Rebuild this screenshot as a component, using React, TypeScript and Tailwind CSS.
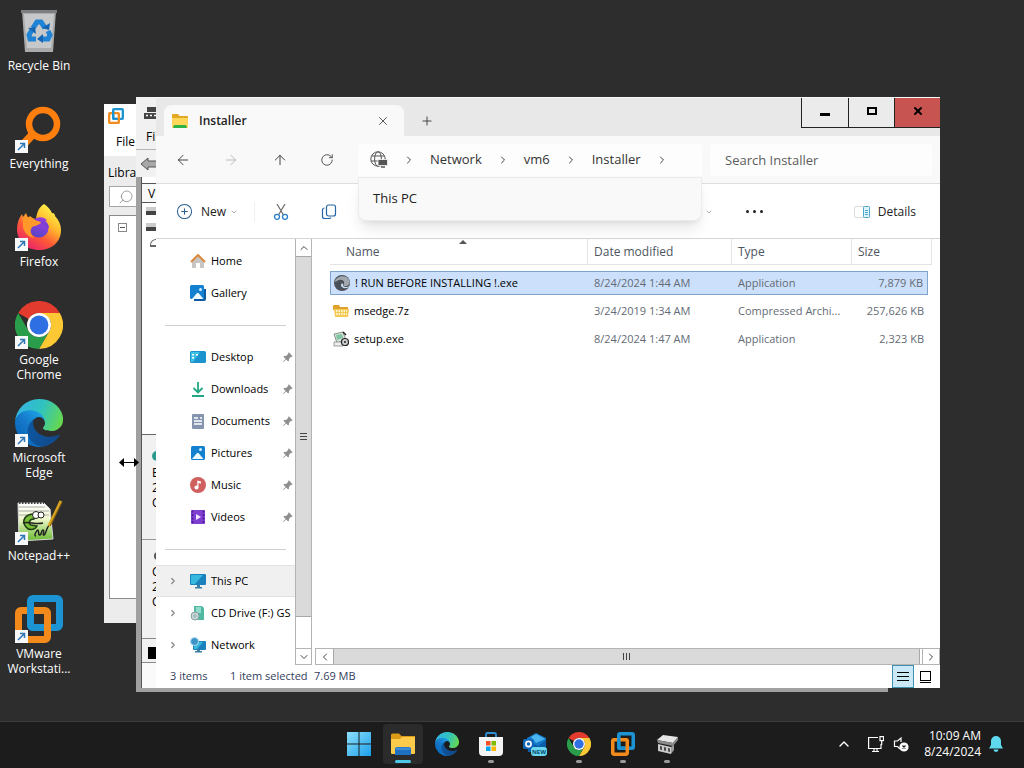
import type { ReactNode } from "react"
import {
  ArrowLeft,
  ArrowRight,
  ArrowUp,
  ChevronDown,
  ChevronLeft,
  ChevronRight,
  ChevronUp,
  CirclePlus,
  Plus,
  RotateCw,
  Search,
  X,
} from "lucide-react"
import { BsPinAngleFill } from "react-icons/bs"

/* ---------- app logos ---------- */

function EdgeLogo({ className }: { className?: string }) {
  return (
    <svg viewBox="0 0 256 256" className={className}>
      <defs>
        <linearGradient id="edgeA" x1="0" y1="0" x2="1" y2="0.3">
          <stop offset="0" stopColor="#0c59a4" />
          <stop offset="1" stopColor="#114a8b" />
        </linearGradient>
        <linearGradient id="edgeB" x1="0.8" y1="0.2" x2="0.2" y2="0.9">
          <stop offset="0" stopColor="#1b9de2" />
          <stop offset="0.5" stopColor="#1676c8" />
          <stop offset="1" stopColor="#0667ba" />
        </linearGradient>
        <linearGradient id="edgeC" x1="0" y1="0.3" x2="1" y2="0.6">
          <stop offset="0" stopColor="#35b5e3" />
          <stop offset="0.5" stopColor="#2fc2c0" />
          <stop offset="1" stopColor="#66d850" />
        </linearGradient>
      </defs>
      <path
        fill="url(#edgeA)"
        d="M231 190.5c-3.4 1.8-6.9 3.4-10.5 4.7a101.8 101.8 0 0 1-35.9 6.5c-47.3 0-88.5-32.5-88.5-74.3a31.5 31.5 0 0 1 16.4-27.3c-42.8 1.8-53.8 46.4-53.8 72.5 0 73.9 68.1 81.4 82.8 81.4 7.9 0 19.8-2.3 27-4.6l1.3-.4a128.3 128.3 0 0 0 66.6-52.8 4 4 0 0 0-5.4-5.7Z"
      />
      <path
        fill="url(#edgeB)"
        d="M105.7 241.4a79.2 79.2 0 0 1-22.7-21.3 80.7 80.7 0 0 1 29.5-120c3.2-1.5 8.4-4.1 15.5-4a32.4 32.4 0 0 1 25.7 13 31.9 31.9 0 0 1 6.3 18.7c0-.2 24.5-79.6-80-79.6-43.9 0-80 41.6-80 78.2a130.2 130.2 0 0 0 12.1 56 128 128 0 0 0 156.4 67.1 75.5 75.5 0 0 1-62.8-8Z"
      />
      <path
        fill="url(#edgeC)"
        d="M152.3 148.9c-.8 1-3.3 2.5-3.3 5.7 0 2.6 1.7 5.2 4.8 7.3 14.4 10.1 41.7 8.7 41.8 8.7a59.6 59.6 0 0 0 30.4-8.3 61.4 61.4 0 0 0 30.4-53c.2-22.5-8-37.4-11.3-43.9C224 24.2 178.8 0 129.6 0A128 128 0 0 0 .1 126.2c.5-36.5 36.8-66 80-66 3.5 0 23.5.3 42 10a72.6 72.6 0 0 1 30.9 29.3c6.1 10.6 7.2 24.1 7.2 29.5s-2.7 13.3-7.9 19.9Z"
      />
    </svg>
  )
}

function ChromeLogo({ className }: { className?: string }) {
  return (
    <svg viewBox="0 0 48 48" className={className}>
      <path fill="#e33b2e" d="M3.2 12A24 24 0 0 1 44.8 12H24a12 12 0 0 0-10.4 6z" />
      <path fill="#fcc934" d="M44.8 12A24 24 0 0 1 24 48l10.4-18A12 12 0 0 0 34.4 18L24 12z" />
      <path fill="#2a9d4a" d="M24 48A24 24 0 0 1 3.2 12l10.4 18A12 12 0 0 0 34.4 30z" />
      <circle cx="24" cy="24" r="12" fill="#fff" />
      <circle cx="24" cy="24" r="9.4" fill="#2f6fe4" />
    </svg>
  )
}

function VmwareLogo({ className }: { className?: string }) {
  return (
    <svg viewBox="0 0 48 48" className={className} fill="none" strokeWidth="7">
      <rect x="15.500" y="3.500" width="29" height="29" rx="2.500" stroke="#1c93d2" />
      <path stroke="#f38b1c" d="M19 15.500H6A2.500 2.500 0 0 0 3.500 18v24A2.500 2.500 0 0 0 6 44.500h24a2.500 2.500 0 0 0 2.500-2.500V18a2.500 2.500 0 0 0-2.500-2.500H18" />
      <path stroke="#1c93d2" d="M15.500 10v20a2.500 2.500 0 0 0 2.500 2.500H28" />
    </svg>
  )
}

function FirefoxLogo({ className }: { className?: string }) {
  return (
    <svg viewBox="0 0 48 48" className={className}>
      <defs>
        <linearGradient id="ffBody" x1="0.8" y1="0.1" x2="0.25" y2="0.95">
          <stop offset="0" stopColor="#fff04a" />
          <stop offset="0.35" stopColor="#ffb52c" />
          <stop offset="0.65" stopColor="#ff5a36" />
          <stop offset="1" stopColor="#e9256a" />
        </linearGradient>
        <linearGradient id="ffGlobe" x1="0.7" y1="0" x2="0.3" y2="1">
          <stop offset="0" stopColor="#a63be0" />
          <stop offset="1" stopColor="#5046c8" />
        </linearGradient>
      </defs>
      <path
        fill="url(#ffBody)"
        d="M29 1c5 3 7 7 8 9 2 0 3 1 3 3 4 4 6 9 6 14 0 12-9 20-22 20S2 38 2 26c0-6 2-11 5-15l1 3 3-4 2 5 2-2c2 2 4 3 6 3 1-7 3-12 8-15z"
      />
      <circle cx="24" cy="25" r="9.500" fill="url(#ffGlobe)" />
      <path fill="url(#ffGlobe)" d="M19 17c3-3 8-4 13 0l-2 1c3 2 4 5 4 7l-8-5z" />
      <path fill="#ff9a2a" d="M8 14c5-1 9 0 12 3l6 2c-1 3-4 3-6 4-2 0-3 1-4 3-1 3 0 6 3 9-6-1-10-6-11-11z" />
    </svg>
  )
}

function FolderLogo({ className }: { className?: string }) {
  return (
    <svg viewBox="0 0 24 24" className={className}>
      <path fill="#dd9a16" d="M0 3a1.500 1.500 0 0 1 1.500-1.500H8L10.500 4H24v7H0z" />
      <path fill="#fccb4b" d="M0 7h9l2-2h12a1 1 0 0 1 1 1v15a1 1 0 0 1-1 1H1a1 1 0 0 1-1-1z" />
      <path fill="#1f6fc0" d="M4 23v-6a2 2 0 0 1 2-2h12a2 2 0 0 1 2 2v6z" />
      <path fill="#3d8bd2" d="M5 15.500h14V18H5z" />
    </svg>
  )
}

function RecycleBin() {
  return (
    <svg viewBox="0 0 48 48" className="size-12">
      <path fill="#a9abac" d="M7 4h34l-3 41H10z" />
      <path fill="#c6c8c9" d="M9 7h30l-3 34H12z" />
      <path fill="#7d7f80" d="M6 3h36v3H6z" />
      <g fill="none" stroke="#1f83d6" strokeWidth="5">
        <path d="m18 21 4-6h4l4 6" />
        <path d="m33 24 2 4-2 4h-6" />
        <path d="M21 32h-6l-1-4 3-5" />
      </g>
      <path fill="#1465b3" d="m27 21 7 2 1-7zM28 27v9l-6-4zM13 21l7-1 1 7z" />
    </svg>
  )
}

function EverythingLogo() {
  return (
    <svg viewBox="0 0 48 48" className="size-12" fill="none" stroke="#ff7f0e">
      <circle cx="28" cy="19" r="14" strokeWidth="6.500" />
      <path d="M18 29 6 42" strokeWidth="8" />
    </svg>
  )
}

function NotepadLogo() {
  return (
    <svg viewBox="0 0 48 48" className="size-12">
      <defs>
        <linearGradient id="npPage" x1="0" y1="0" x2="0" y2="1">
          <stop offset="0" stopColor="#fff" />
          <stop offset="0.4" stopColor="#f2f8cf" />
          <stop offset="1" stopColor="#67b92e" />
        </linearGradient>
      </defs>
      <path fill="url(#npPage)" stroke="#d8d8d8" d="M3 6h26l6 6 3 30-34 2z" />
      <path stroke="#444" strokeWidth="2" strokeDasharray="1.500 1.500" d="M4 6h25" />
      <path stroke="#aaa" d="M4 10h26M4 14h30M4 18h30" />
      <path fill="#79bd38" stroke="#1c3d10" strokeWidth="1.500" d="M19 17c-9 0-13 7-8 13 3 4 9 3 11-1l-6-1c-3-1-2-6 3-6z" />
      <circle cx="21" cy="18" r="3.500" fill="#fff" stroke="#222" />
      <circle cx="26" cy="18" r="3" fill="#fff" stroke="#222" />
      <path fill="none" stroke="#222" strokeWidth="1.500" d="M8 26c6-2 12 2 20 0M21 39c-3 0 1-6 2-6s0 6 2 5 1-5 3-5-1 6 1 5 3-9 5-9" />
      <path stroke="#d9a520" strokeWidth="3" d="M46 4 34 29" />
      <path stroke="#7a5a10" d="M47 5 35 29" />
    </svg>
  )
}

function ServerIcon({ className }: { className?: string }) {
  return (
    <svg viewBox="0 0 24 24" className={className}>
      <path fill="#e6e6e6" d="M2 8 8 3l15 2-5 6z" />
      <path fill="#8b8b8b" d="m2 8 16 3v3L3 11zM18 11l5-6v3l-5 6z" />
      <path fill="#c9c9c9" d="m3 12 13 3v7L3 19z" />
      <path fill="#9b9b9b" d="m16 15 3-2v5l-3 4z" />
      <path fill="#4a4a4a" d="m5 14 2 .5V18l-2-.5zM9 15l2 .5V19l-2-.5zM13 16l2 .5V20l-2-.5z" />
    </svg>
  )
}

function StartLogo() {
  return (
    <svg viewBox="0 0 24 24" className="size-6">
      <defs>
        <linearGradient id="startFill" x1="0" y1="0" x2="24" y2="24" gradientUnits="userSpaceOnUse">
          <stop offset="0" stopColor="#8ee0fb" />
          <stop offset="1" stopColor="#1b9fea" />
        </linearGradient>
      </defs>
      <path fill="url(#startFill)" d="M0 0h11.500v11.500H0zM12.500 0H24v11.500H12.500zM0 12.500h11.500V24H0zM12.500 12.500H24V24H12.500z" />
    </svg>
  )
}

function StoreLogo() {
  return (
    <svg viewBox="0 0 24 24" className="size-6">
      <path fill="none" stroke="#2f8fd6" strokeWidth="1.800" d="M7 6V2.500A1.500 1.500 0 0 1 8.500 1h7A1.500 1.500 0 0 1 17 2.500V6" />
      <path fill="#f4f4f4" d="M0 5h24v15a4 4 0 0 1-4 4H4a4 4 0 0 1-4-4z" />
      <path fill="#f25022" d="M7 9h4.500v4.500H7z" />
      <path fill="#7fba00" d="M12.500 9H17v4.500h-4.500z" />
      <path fill="#00a4ef" d="M7 14.500h4.500V19H7z" />
      <path fill="#ffb900" d="M12.500 14.500H17V19h-4.500z" />
    </svg>
  )
}

function OutlookNewLogo() {
  return (
    <svg viewBox="0 0 24 24" className="size-6">
      <path fill="#1479c9" d="M4 6 13 1l10 5v9H4z" />
      <path fill="#4ab5ef" d="m8 5 5-3 9 5-9 4z" />
      <path fill="#0a5ba8" d="m4 9 11 5 8-6v12H5z" />
      <rect y="7" width="11" height="10" rx="1.500" fill="#0f67b8" />
      <circle cx="5.500" cy="12" r="2.600" fill="none" stroke="#fff" strokeWidth="1.600" />
      <rect x="8" y="15" width="16" height="9" rx="3" fill="#69d8ee" />
      <text x="16" y="21.500" textAnchor="middle" fontSize="6" fontWeight="700" fill="#0b4a70">
        NEW
      </text>
    </svg>
  )
}

/* ---------- small explorer icons ---------- */

function TabFolderIcon() {
  return (
    <svg viewBox="0 0 16 16" className="size-4">
      <path fill="#e5a823" d="M0 2a1 1 0 0 1 1-1h5l1.500 2H15a1 1 0 0 1 1 1v4H0z" />
      <path fill="#ffd75a" d="M0 5h16v9a1 1 0 0 1-1 1H1a1 1 0 0 1-1-1z" />
      <path fill="#2fb344" d="M2 12h12l1 3H1z" />
    </svg>
  )
}

function HomeIcon() {
  return (
    <svg viewBox="0 0 16 16" className="size-4">
      <path fill="#c9c5c3" d="M2 8l6-6 6 6v7h-4v-5H6v5H2z" />
      <path fill="none" stroke="#d98a3d" strokeWidth="2" strokeLinejoin="round" d="M1 9l7-7 7 7" />
    </svg>
  )
}

function PictureIcon({ stacked }: { stacked?: boolean }) {
  return (
    <svg viewBox="0 0 16 16" className="size-4">
      {stacked && <path fill="#0c5aa0" d="M4 4h12v10a2 2 0 0 1-2 2H4z" />}
      <rect x={stacked ? 0 : 1} y={stacked ? 0 : 1} width="14" height="14" rx="1.500" fill="#1380d0" />
      <path fill="#eef8ff" d="m2 14 5-6 1.500 0 5 6z" />
      <circle cx="10.500" cy="4.500" r="1.500" fill="#d4efff" />
    </svg>
  )
}

function DesktopIcon() {
  return (
    <svg viewBox="0 0 16 16" className="size-4">
      <rect y="2" width="16" height="12" rx="1.500" fill="#1c93cf" />
      <path fill="#3fc0e4" d="M1 3h9L3 13H1z" />
      <path fill="#fff" d="M2 5h2v1.500H2zM2 8h2v1.500H2zM6 5h2v1.500H6z" />
    </svg>
  )
}

function DownloadIcon() {
  return (
    <svg viewBox="0 0 16 16" className="size-4" fill="none" stroke="#1fa883" strokeWidth="1.800">
      <path d="M8 1v10M3.500 7 8 11.500 12.500 7M2 15h12" />
    </svg>
  )
}

function DocumentIcon() {
  return (
    <svg viewBox="0 0 16 16" className="size-4">
      <rect x="2" y="1" width="12" height="15" rx="1" fill="#8794b0" />
      <path stroke="#fff" strokeWidth="1.400" d="M4 5h4M4 8h8M4 11h8M10 5h2" />
    </svg>
  )
}

function MusicIcon() {
  return (
    <svg viewBox="0 0 16 16" className="size-4">
      <circle cx="8" cy="8" r="8" fill="#d0605f" />
      <circle cx="6.500" cy="10.500" r="2" fill="#fff" />
      <path fill="#fff" d="M7.300 3.500 11 4.500v2L8.500 6v4.500H7.300z" />
    </svg>
  )
}

function VideoIcon() {
  return (
    <svg viewBox="0 0 16 16" className="size-4">
      <rect x="1" y="1" width="14" height="14" rx="1" fill="#7e3fd0" />
      <path stroke="#4a1d94" strokeWidth="1.600" strokeDasharray="2 1.500" d="M2.500 1.500v13M13.500 1.500v13" />
      <path fill="#f1e6ff" d="m6 5 5 3-5 3z" />
    </svg>
  )
}

function MonitorIcon({ globe }: { globe?: boolean }) {
  return (
    <svg viewBox="0 0 16 16" className="size-4">
      <rect x={globe ? 3 : 0} y={globe ? 4 : 1} width={globe ? 13 : 16} height={globe ? 9 : 11} rx="1" fill="#1b82bd" />
      <path fill="#37b9df" d={globe ? "M4 5h9l-6 7H4z" : "M1 2h12L5 11H1z"} />
      <path fill="#3b7ea3" d="M7 12h3v2h2v1.500H5V14h2z" />
      {globe && <circle cx="4.500" cy="4.500" r="4" fill="#3d95c7" stroke="#b7dff2" />}
    </svg>
  )
}

function CdDriveIcon() {
  return (
    <svg viewBox="0 0 16 16" className="size-4">
      <path fill="#51b9a2" d="M4 1h8l2 2v12H4z" />
      <path fill="#93dccb" d="M6 2h5v6H6z" />
      <circle cx="5" cy="11" r="4" fill="#c9d6d6" stroke="#86a3a3" />
      <circle cx="5" cy="11" r="1.200" fill="#fff" stroke="#86a3a3" />
    </svg>
  )
}

function GrayEdgeIcon() {
  return (
    <svg viewBox="0 0 16 16" className="size-4">
      <circle cx="8" cy="8" r="8" fill="#4b5158" />
      <path fill="#a2a8af" d="M1 6C3 1 12-1 15 5c2 4-1 6-4 6-2 0-2-1-1-2 1-3-2-5-5-4S1 8 1 6z" />
      <path fill="#cfe0f7" d="M9 9c-1 3 3 4 7 2-2 3-9 3-9-1 0-1 1-2 2-1z" />
    </svg>
  )
}

function ArchiveIcon() {
  return (
    <svg viewBox="0 0 16 16" className="size-4">
      <path fill="#e0a22c" d="M0 3a1 1 0 0 1 1-1h5l1 2h8v3H0z" />
      <path fill="#f5c955" d="M1 6h15l-1 8H2z" />
      <path stroke="#fff3c9" strokeWidth="2" strokeDasharray="1.500 1" d="M3 8h11M3 11h11" />
    </svg>
  )
}

function SetupIcon() {
  return (
    <svg viewBox="0 0 16 16" className="size-4">
      <path fill="#d7e3d9" stroke="#5d6b60" strokeWidth="0.700" d="m1 3 9-2 3 8-9 3z" />
      <path fill="#7fc4a3" d="m3 4 6-1 1 4-6 2z" />
      <path fill="#eee" stroke="#777" strokeWidth="0.700" d="M1 11h9v4H1z" />
      <circle cx="12" cy="11" r="3.500" fill="#cfcfcf" stroke="#222" strokeWidth="1.200" />
      <circle cx="12" cy="11" r="1" fill="#222" />
      <path stroke="#222" strokeWidth="1.500" d="m10 1 3 3" />
    </svg>
  )
}

function GlobeMonitorIcon() {
  return (
    <svg viewBox="0 0 18 18" className="size-[18px]" fill="none" stroke="#555">
      <circle cx="8" cy="8" r="7.200" />
      <ellipse cx="8" cy="8" rx="3.400" ry="7.200" />
      <path d="M1.500 5h13M1 10h8" />
      <path fill="#555" stroke="#f9f9f9" strokeWidth="0.800" d="M8 8.500h9.500v6H8z" />
      <path d="M11 16h4" strokeWidth="1.500" />
    </svg>
  )
}

function CutIcon() {
  return (
    <svg viewBox="0 0 16 16" className="size-4" fill="none">
      <path stroke="#6b6b6b" strokeWidth="1.200" d="M4 0l6.500 11M12 0 5.500 11" />
      <circle cx="4" cy="12.800" r="2.500" stroke="#2b7fd0" strokeWidth="1.300" />
      <circle cx="12" cy="12.800" r="2.500" stroke="#2b7fd0" strokeWidth="1.300" />
    </svg>
  )
}

function CopyIcon() {
  return (
    <svg viewBox="0 0 16 16" className="size-4" fill="none" strokeWidth="1.200">
      <rect x="5.500" y="1" width="9" height="11" rx="2" stroke="#2465a8" />
      <path stroke="#2465a8" d="M3.500 4A2 2 0 0 0 1.500 6v6.500a2 2 0 0 0 2 2H8a2 2 0 0 0 2-1" />
    </svg>
  )
}

function DetailsIcon() {
  return (
    <svg viewBox="0 0 16 14" className="h-[14px] w-4" fill="none">
      <rect x="0.500" y="1.500" width="15" height="11" rx="1.500" stroke="#dcdcdc" />
      <rect x="9.500" y="1.500" width="6" height="11" rx="1" fill="#dff3fa" stroke="#4ea9c9" />
      <path stroke="#4ea9c9" d="M11 5.500h3M11 7.500h3M11 9.500h3" />
    </svg>
  )
}

/* ---------- desktop ---------- */

const shortcuts: { label: string; icon: ReactNode; link?: boolean }[] = [
  { label: "Recycle Bin", icon: <RecycleBin /> },
  { label: "Everything", icon: <EverythingLogo />, link: true },
  { label: "Firefox", icon: <FirefoxLogo className="size-12" />, link: true },
  { label: "Google Chrome", icon: <ChromeLogo className="size-12" />, link: true },
  { label: "Microsoft Edge", icon: <EdgeLogo className="size-12" />, link: true },
  { label: "Notepad++", icon: <NotepadLogo />, link: true },
  { label: "VMware Workstati...", icon: <VmwareLogo className="size-12" />, link: true },
]

function DesktopShortcuts() {
  return (
    <div className="flex w-[78px] flex-col">
      {shortcuts.map((s) => (
        <button key={s.label} className="flex h-[98px] flex-col items-center gap-[3px] pt-[7px] text-white">
          <span className="relative">
            {s.icon}
            {s.link && (
              <svg viewBox="0 0 13 13" className="absolute bottom-0 left-0 size-[13px]">
                <path fill="#f6f8fa" d="M0 0h13v13H0z" />
                <path fill="none" stroke="#2f76b5" strokeWidth="1.500" d="m3 10 6-6M5 3.500h4.500V8" />
              </svg>
            )}
          </span>
          <span className="w-[70px] text-center text-xs leading-[15px]">{s.label}</span>
        </button>
      ))}
    </div>
  )
}

function LibraryWindow() {
  return (
    <div className="absolute bottom-[98px] left-[104px] top-[104px] flex w-[300px] flex-col bg-[#ececec] text-xs text-black">
      <div className="flex h-6 items-center bg-white pl-1">
        <VmwareLogo className="size-4" />
      </div>
      <div className="flex h-7 items-center bg-white pl-3">File</div>
      <div className="flex h-[30px] items-center pt-1 pl-1">Library</div>
      <div className="ml-[5px] flex h-[21px] shrink-0 items-center border border-[#a5a5a5] bg-white pl-2">
        <Search className="size-4 -scale-x-100 text-[#888]" strokeWidth={1.2} />
      </div>
      <div className="mt-2 mb-6 ml-[5px] flex-1 border border-[#8a8a8a] bg-white px-2 pt-[7px]">
        <span className="flex size-[9px] items-center border border-[#888] px-px">
          <span className="h-px w-full bg-[#555]" />
        </span>
      </div>
    </div>
  )
}

function ManagerWindow() {
  return (
    <div className="absolute bottom-[29px] left-[136px] right-[136px] top-[97px] flex flex-col bg-[#a0a0a0] text-xs text-black">
      <div className="h-[52px] shrink-0 bg-[#f1f1f1]">
        <div className="flex h-7 items-center pt-1 pl-2">
          <svg viewBox="0 0 16 12" className="h-3 w-4">
            <path fill="#444" d="M3 0h13v5H3zM0 6h16v6H0z" />
            <path stroke="#fff" strokeWidth="1.500" strokeDasharray="2 2" d="M2 8.500h14" />
          </svg>
        </div>
        <div className="flex h-6 items-center pl-[10px]">File</div>
      </div>
      <div className="flex h-7 shrink-0 items-center border-t border-[#b5b5b5] bg-[#f1f1f1] pl-1">
        <svg viewBox="0 0 18 14" className="h-[14px] w-[18px]">
          <path fill="#a8a8a8" stroke="#555" d="m1 7 7-6v3h9v6H8v3z" />
        </svg>
      </div>
      <div className="mb-1 ml-[5px] flex flex-1 flex-col border-l border-[#555] bg-white">
        <div className="mt-[6px] h-5 border-y border-[#555] bg-[#fafafa] pl-[6px] leading-5">VM</div>
        <div className="flex flex-1 flex-col gap-2 pt-1 pl-1">
          <span className="h-2 w-4 border-b-4 border-[#444] bg-[#ccc]" />
          <span className="h-2 w-4 border-b-4 border-[#444] bg-[#ccc]" />
          <span className="ml-1 h-2 w-3 rounded-t-full border border-b-2 border-[#666]" />
        </div>
        <div className="h-[105px] border-t border-[#666] bg-[#f1f1f1] pt-4 pl-[10px] leading-[15px]">
          <span className="block size-[10px] rounded-full bg-[#2c9a8c]" />
          <p className="pt-1">
            E<br />2<br />C
          </p>
        </div>
        <div className="h-[99px] border-t border-[#999] bg-[#f1f1f1] pt-3 pl-[10px] leading-[15px]">
          <span className="ml-[2px] block size-2 rounded-full bg-[#555]" />
          <p className="pt-1">
            C<br />2<br />C
          </p>
        </div>
        <div className="h-[25px] border-y border-[#888] bg-[#f1f1f1] pt-2 pl-[6px]">
          <span className="block h-3 w-4 bg-black" />
        </div>
        <div className="h-[25px] bg-[#fafafa]" />
      </div>
    </div>
  )
}

/* ---------- file explorer ---------- */

const places: { label: string; icon: ReactNode; pinned?: boolean; expand?: boolean; active?: boolean }[][] = [
  [
    { label: "Home", icon: <HomeIcon /> },
    { label: "Gallery", icon: <PictureIcon stacked /> },
  ],
  [
    { label: "Desktop", icon: <DesktopIcon />, pinned: true },
    { label: "Downloads", icon: <DownloadIcon />, pinned: true },
    { label: "Documents", icon: <DocumentIcon />, pinned: true },
    { label: "Pictures", icon: <PictureIcon />, pinned: true },
    { label: "Music", icon: <MusicIcon />, pinned: true },
    { label: "Videos", icon: <VideoIcon />, pinned: true },
  ],
  [
    { label: "This PC", icon: <MonitorIcon />, expand: true, active: true },
    { label: "CD Drive (F:) GS", icon: <CdDriveIcon />, expand: true },
    { label: "Network", icon: <MonitorIcon globe />, expand: true },
  ],
]

const files = [
  { name: "! RUN BEFORE INSTALLING !.exe", date: "8/24/2024 1:44 AM", type: "Application", size: "7,879 KB", icon: <GrayEdgeIcon />, selected: true },
  { name: "msedge.7z", date: "3/24/2019 1:34 AM", type: "Compressed Archi...", size: "257,626 KB", icon: <ArchiveIcon /> },
  { name: "setup.exe", date: "8/24/2024 1:47 AM", type: "Application", size: "2,323 KB", icon: <SetupIcon /> },
]

function TitleBar() {
  return (
    <div className="flex h-[39px] shrink-0 items-end border-t border-[#f8f8f8] bg-[#e8e8e8] pl-2">
      <div className="flex h-[31px] w-60 items-center rounded-t-lg bg-[#f9f9f9] pr-[10px] pl-2">
        <TabFolderIcon />
        <span className="ml-[11px] flex-1 text-xs font-semibold text-[#222]">Installer</span>
        <button aria-label="Close tab" className="p-1">
          <X className="size-[14px] text-[#444]" strokeWidth={1.5} />
        </button>
      </div>
      <button aria-label="New tab" className="flex h-[31px] w-[46px] items-center justify-center">
        <Plus className="size-[14px] text-[#333]" strokeWidth={1.5} />
      </button>
      <div className="ml-auto flex h-[30px] self-start border-b border-l border-[#222]">
        <button aria-label="Minimize" className="flex w-[46px] items-center justify-center bg-[#ebebeb]">
          <span className="mt-1 h-[3px] w-[10px] bg-black" />
        </button>
        <button aria-label="Maximize" className="flex w-[46px] items-center justify-center border-l border-[#222] bg-[#ebebeb]">
          <span className="mb-1 h-2 w-[10px] border-2 border-black" />
        </button>
        <button aria-label="Close" className="flex w-[46px] items-center justify-center border-l border-[#222] bg-[#c75450] pb-1">
          <X className="size-3 text-black" strokeWidth={4} />
        </button>
      </div>
    </div>
  )
}

function Crumb({ children }: { children: ReactNode }) {
  return (
    <>
      <ChevronRight className="size-3 shrink-0 text-[#444]" />
      <a href="#" className="text-[13px] text-[#333]">
        {children}
      </a>
    </>
  )
}

function NavBar() {
  return (
    <div className="flex h-12 shrink-0 items-center border-b border-[#dedede] bg-[#f9f9f9] pr-2">
      <div className="flex w-[202px] shrink-0 justify-between pr-6 pl-[19px]">
        <button aria-label="Back">
          <ArrowLeft className="size-4 text-[#444]" strokeWidth={1.5} />
        </button>
        <button aria-label="Forward">
          <ArrowRight className="size-4 text-[#bbb]" strokeWidth={1.5} />
        </button>
        <button aria-label="Up">
          <ArrowUp className="size-4 text-[#444]" strokeWidth={1.5} />
        </button>
        <button aria-label="Refresh">
          <RotateCw className="size-[14px] text-[#444]" strokeWidth={1.5} />
        </button>
      </div>
      <nav aria-label="Address" className="relative flex h-8 min-w-[344px] flex-1 items-center gap-[15px] rounded-t bg-[#fdfdfd] pl-3">
        <GlobeMonitorIcon />
        <Crumb>Network</Crumb>
        <Crumb>vm6</Crumb>
        <Crumb>Installer</Crumb>
        <ChevronRight className="size-3 text-[#444]" />
        <div className="absolute inset-x-0 top-[33px] z-10 flex h-11 items-center rounded-b-lg border border-[#ececec] bg-[#f9f9f9] pl-[14px] text-[13px] text-[#222] shadow-lg">
          This PC
        </div>
      </nav>
      <input
        aria-label="Search Installer"
        placeholder="Search Installer"
        className="ml-2 h-8 w-[223px] rounded bg-[#fdfdfd] px-[15px] text-[13px] placeholder:text-[#5c5c5c]"
      />
    </div>
  )
}

function CommandBar() {
  return (
    <div className="flex h-[55px] shrink-0 items-center border-b border-[#d5d5d5] bg-white px-5 pt-px text-xs text-[#222]">
      <button className="flex items-center">
        <CirclePlus className="size-[17px] text-[#2c5f8f]" strokeWidth={1.5} />
        <span className="ml-2">New</span>
        <ChevronDown className="ml-1 size-2 text-[#888]" />
      </button>
      <span className="mx-4 h-5 w-px bg-[#f0f0f0]" />
      <button aria-label="Cut" className="ml-[2px]">
        <CutIcon />
      </button>
      <button aria-label="Copy" className="ml-8">
        <CopyIcon />
      </button>
      <button aria-label="View" className="ml-auto">
        <ChevronDown className="size-2 text-[#888]" />
      </button>
      <button aria-label="See more" className="ml-8 flex w-5 justify-center gap-1">
        <span className="size-[3px] rounded-full bg-[#222]" />
        <span className="size-[3px] rounded-full bg-[#222]" />
        <span className="size-[3px] rounded-full bg-[#222]" />
      </button>
      <button className="mr-1 ml-[89px] flex items-center gap-2">
        <DetailsIcon />
        Details
      </button>
    </div>
  )
}

function Sidebar() {
  return (
    <div className="flex w-[156px] shrink-0">
      <div className="min-w-0 flex-1 overflow-hidden pt-[6px]">
        {places.map((group, i) => (
          <div key={i}>
            {i > 0 && (
              <div className="flex h-8 items-center px-[9px]">
                <span className="h-px flex-1 bg-[#cfcfcf]" />
              </div>
            )}
            {group.map((p) => (
              <button
                key={p.label}
                className={
                  p.active
                    ? "flex h-8 w-full items-center border-y border-[#e2e2e2] bg-[#f0f0f0] pr-[2px] pl-3 text-left"
                    : "flex h-8 w-full items-center pr-[2px] pl-3 text-left"
                }
              >
                <span className="w-[22px] shrink-0">{p.expand && <ChevronRight className="size-[10px] text-[#888]" strokeWidth={3} />}</span>
                <span className="shrink-0">{p.icon}</span>
                <span className="ml-[5px] flex-1 whitespace-nowrap text-[11px] text-black">{p.label}</span>
                {p.pinned && <BsPinAngleFill className="size-[11px] shrink-0 text-[#8f8f8f]" />}
              </button>
            ))}
          </div>
        ))}
      </div>
      <div className="flex w-[17px] flex-col border border-t-0 border-[#b4b4b4] bg-white">
        <div className="flex h-[17px] items-center justify-center">
          <ChevronUp className="size-3 text-[#444]" />
        </div>
        <div className="flex flex-1 flex-col items-center justify-center gap-[2px] border-y border-[#a8a8a8] bg-[#dadada]">
          <span className="h-px w-[7px] bg-[#444]" />
          <span className="h-px w-[7px] bg-[#444]" />
          <span className="h-px w-[7px] bg-[#444]" />
        </div>
        <div className="mt-[31px] flex h-4 items-center justify-center border-t border-[#b4b4b4]">
          <ChevronDown className="size-3 text-[#444]" />
        </div>
      </div>
    </div>
  )
}

function FileList() {
  return (
    <div className="flex min-w-0 flex-1 flex-col">
      <div className="flex-1 overflow-hidden pr-2 pl-[18px]">
        <table className="w-full table-fixed border-separate border-spacing-0 text-[11px]">
          <thead>
            <tr className="h-[26px] text-left text-xs text-[#4c5560]">
              <th className="relative border-r border-b border-[#e4e4e4] pl-4 font-normal">
                Name
                <svg viewBox="0 0 8 4" className="absolute top-[1px] left-1/2 h-1 w-2">
                  <path fill="#555" d="M4 0l4 4H0z" />
                </svg>
              </th>
              <th className="w-36 border-r border-b border-[#e4e4e4] pl-[6px] font-normal">Date modified</th>
              <th className="w-[120px] border-r border-b border-[#e4e4e4] pl-[6px] font-normal">Type</th>
              <th className="w-20 border-r border-b border-[#e4e4e4] pl-[6px] font-normal">Size</th>
            </tr>
            <tr className="h-1" aria-hidden="true">
              <td colSpan={4} className="p-0" />
            </tr>
          </thead>
          <tbody>
            {files.map((f) => {
              const cell = f.selected
                ? "flex h-6 items-center border-y border-[#7ea4cc] bg-[#cce0fc] whitespace-nowrap"
                : "flex h-6 items-center whitespace-nowrap"
              return (
                <tr key={f.name} className="h-7 text-[#636b75]">
                  <td className="p-0">
                    <div className={`${cell} pl-[3px] text-black ${f.selected ? "border-l" : ""}`}>
                      {f.icon}
                      <span className="ml-[5px]">{f.name}</span>
                    </div>
                  </td>
                  <td className="p-0">
                    <div className={`${cell} pl-[6px]`}>{f.date}</div>
                  </td>
                  <td className="p-0">
                    <div className={`${cell} pl-[6px]`}>{f.type}</div>
                  </td>
                  <td className="p-0 pr-1">
                    <div className={`${cell} justify-end pr-1 ${f.selected ? "border-r" : ""}`}>{f.size}</div>
                  </td>
                </tr>
              )
            })}
          </tbody>
        </table>
      </div>
      <div className="ml-[3px] flex h-[17px] border border-[#b4b4b4] bg-white">
        <div className="flex w-[17px] items-center justify-center">
          <ChevronLeft className="size-3 text-[#444]" />
        </div>
        <div className="flex flex-1 items-center justify-center gap-[2px] border-x border-[#a8a8a8] bg-[#dadada]">
          <span className="h-[7px] w-px bg-[#444]" />
          <span className="h-[7px] w-px bg-[#444]" />
          <span className="h-[7px] w-px bg-[#444]" />
        </div>
        <div className="ml-[2px] flex w-[17px] items-center justify-center border-l border-[#b4b4b4]">
          <ChevronRight className="size-3 text-[#444]" />
        </div>
      </div>
    </div>
  )
}

function StatusBar() {
  return (
    <div className="flex h-[23px] shrink-0 items-center bg-white pl-[14px] text-[11px] text-[#33405c]">
      <span className="w-[60px]">3 items</span>
      <span className="w-[84px] whitespace-nowrap">1 item selected</span>
      <span>7.69 MB</span>
      <button aria-label="Details view" className="ml-auto flex h-[23px] w-[22px] flex-col items-center justify-center gap-[3px] border border-[#3f8fae] bg-[#cbe8f6]">
        <span className="h-px w-3 bg-black" />
        <span className="h-px w-3 bg-black" />
        <span className="h-px w-3 bg-black" />
      </button>
      <button aria-label="Large icons view" className="flex w-[26px] flex-col items-center gap-px pr-1">
        <span className="h-[10px] w-[11px] border border-black" />
        <span className="h-px w-[11px] bg-black" />
      </button>
    </div>
  )
}

function ExplorerWindow() {
  return (
    <div className="absolute bottom-[33px] left-[156px] right-[84px] top-[97px] flex flex-col bg-white">
      <TitleBar />
      <NavBar />
      <CommandBar />
      <div className="flex min-h-0 flex-1">
        <Sidebar />
        <FileList />
      </div>
      <StatusBar />
    </div>
  )
}

/* ---------- taskbar ---------- */

const pinnedApps: { name: string; icon: ReactNode; state?: "open" | "active" }[] = [
  { name: "Start", icon: <StartLogo /> },
  { name: "File Explorer", icon: <FolderLogo className="size-6" />, state: "active" },
  { name: "Microsoft Edge", icon: <EdgeLogo className="size-6" /> },
  { name: "Microsoft Store", icon: <StoreLogo />, state: "open" },
  { name: "Outlook", icon: <OutlookNewLogo /> },
  { name: "Google Chrome", icon: <ChromeLogo className="size-6" />, state: "open" },
  { name: "VMware Workstation", icon: <VmwareLogo className="size-6" />, state: "open" },
  { name: "Server Manager", icon: <ServerIcon className="size-6" />, state: "open" },
]

function Taskbar() {
  return (
    <footer className="grid h-[47px] shrink-0 grid-cols-[1fr_auto_1fr] border-t border-[#3c3c3c] bg-[#1c1c1c] pb-[2px]">
      <span />
      <div className="flex items-center gap-1 pl-px">
        {pinnedApps.map((app) => (
          <button
            key={app.name}
            aria-label={app.name}
            className={
              app.state === "active"
                ? "relative flex size-10 items-center justify-center rounded bg-[#2b2b2b]"
                : "relative flex size-10 items-center justify-center rounded"
            }
          >
            {app.icon}
            {app.state === "active" && <span className="absolute bottom-px h-[3px] w-4 rounded-full bg-[#4cc9e6]" />}
            {app.state === "open" && <span className="absolute bottom-px h-[3px] w-[6px] rounded-full bg-[#9a9a9a]" />}
          </button>
        ))}
      </div>
      <div className="flex items-center justify-end pr-[21px] text-white">
        <button aria-label="Show hidden icons">
          <ChevronUp className="size-4" />
        </button>
        <button aria-label="Network" className="ml-4">
          <svg viewBox="0 0 16 16" className="size-4" fill="none" stroke="#fff" strokeWidth="1.200">
            <path d="M10 1.500H.600v11H13V8M4 15.500h7M6 12.500v3M9 12.500v3" />
            <rect x="12" y="0.600" width="3.500" height="4" />
            <path d="M13.700 5v4" />
          </svg>
        </button>
        <button aria-label="Volume" className="ml-[9px]">
          <svg viewBox="0 0 16 16" className="size-4" fill="none" stroke="#fff" strokeWidth="1.200">
            <path d="M8 6V2L4.500 5H1.500v5.500h3L7 13" />
            <circle cx="11" cy="11" r="4" fill="#fff" />
            <path stroke="#1c1c1c" d="m9.500 9.500 3 3M12.500 9.500l-3 3" />
          </svg>
        </button>
        <div className="ml-[15px] text-right text-xs leading-4">
          <p>10:09 AM</p>
          <p>8/24/2024</p>
        </div>
        <button aria-label="Notifications" className="ml-2">
          <svg viewBox="0 0 14 16" className="h-4 w-[14px]" fill="#5fd9ee">
            <path d="M7 0a5 5 0 0 1 5 5v4l2 3.500H0L2 9V5a5 5 0 0 1 5-5zM4.500 13.500h5a2.500 2.500 0 0 1-5 0z" />
          </svg>
        </button>
      </div>
    </footer>
  )
}

export default function App() {
  return (
    <div className="flex h-screen flex-col overflow-hidden bg-[#2d2d2d] font-['Open_Sans','Noto_Sans',sans-serif]">
      <main className="relative min-h-0 flex-1">
        <DesktopShortcuts />
        <LibraryWindow />
        <ManagerWindow />
        <ExplorerWindow />
        {/* Resize pointer */}
        <svg viewBox="0 0 20 9" className="absolute left-[119px] top-[458px] h-[9px] w-5">
          <path d="M0 4.500 5 0v4h10V0l5 4.500L15 9V5H5v4z" />
        </svg>
      </main>
      <Taskbar />
    </div>
  )
}
